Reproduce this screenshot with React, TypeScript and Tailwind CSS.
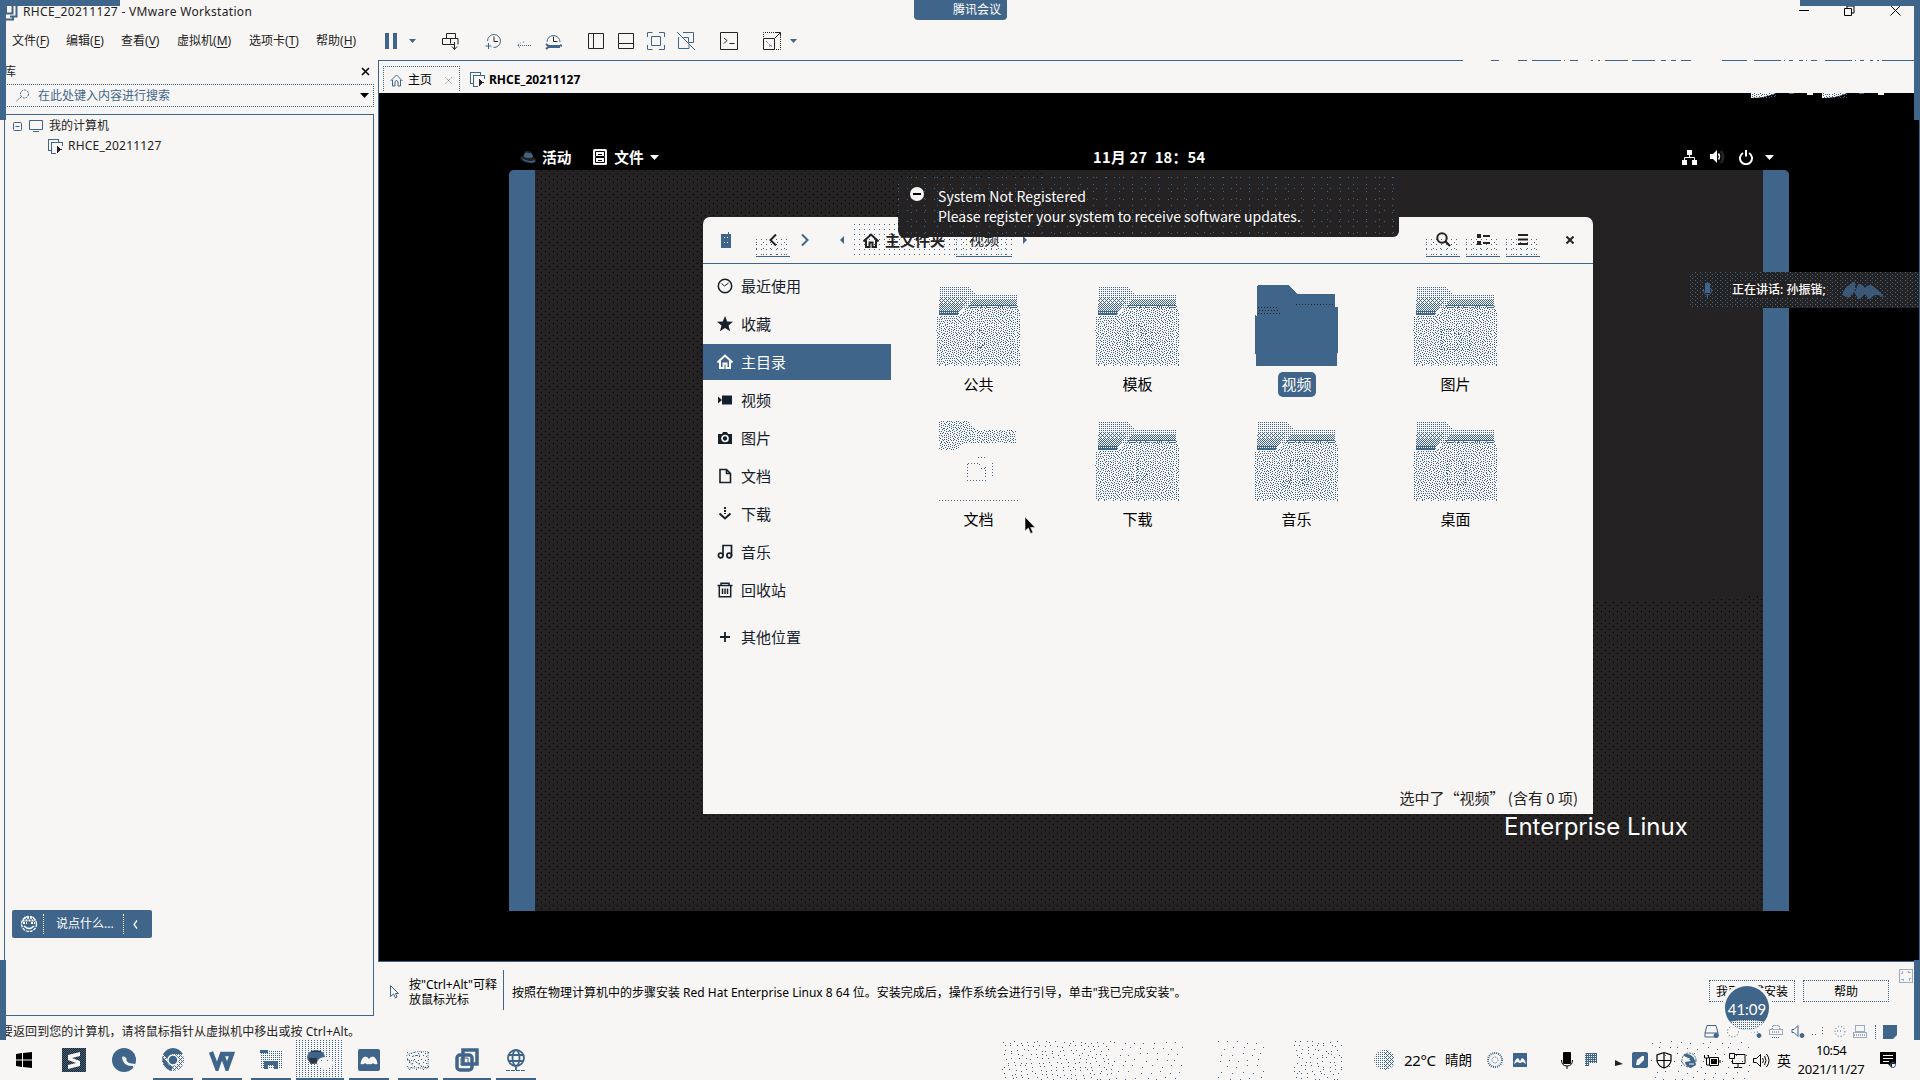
import type { ReactNode } from 'react';

const BLUE = '#40658a';
const DARK = '#242223';

type IconProps = { w: number; h: number; children: ReactNode; className?: string };

function Ico({ w, h, children, className = '' }: IconProps) {
  return (
    <svg width={w} height={h} viewBox={`0 0 ${w} ${h}`} fill="none" stroke="currentColor" className={`shrink-0 ${className}`}>
      {children}
    </svg>
  );
}

/* One error-diffused 40x40 tile of the given coverage, so the grain has no visible grid */
function grain(coverage: number): string {
  const n = 40;
  const buf = Array.from({ length: n + 1 }, () => new Array<number>(n + 2).fill(coverage));
  let seed = 7;
  let d = '';
  for (let y = 0; y < n; y++) {
    for (let x = 0; x < n; x++) {
      seed = (seed * 1103515245 + 12345) % 2147483648;
      const v = buf[y][x];
      const on = v + (seed / 2147483648 - 0.5) * 0.25 > 0.5;
      const e = v - (on ? 1 : 0);
      buf[y][x + 1] += (e * 7) / 16;
      if (x > 0) buf[y + 1][x - 1] += (e * 3) / 16;
      buf[y + 1][x] += (e * 5) / 16;
      buf[y + 1][x + 1] += e / 16;
      if (on) d += `M${x} ${y}h1v1h-1z`;
    }
  }
  return d;
}

const GRAIN = grain(0.24);

/* Shared halftone patterns used by the dithered drawings */
function Patterns() {
  return (
    <svg width="0" height="0" className="absolute" shapeRendering="crispEdges">
      <defs>
        <pattern id="grain" width="40" height="40" patternUnits="userSpaceOnUse">
          <path fill={BLUE} d={GRAIN} />
        </pattern>
        <pattern id="d25" width="2" height="2" patternUnits="userSpaceOnUse">
          <path fill={BLUE} d="M0 0h1v1h-1z" />
        </pattern>
        <pattern id="d37" width="4" height="4" patternUnits="userSpaceOnUse">
          <path fill={BLUE} d="M0 0h1v1h-1zM2 0h1v1h-1zM1 1h1v1h-1zM0 2h1v1h-1zM2 2h1v1h-1zM3 3h1v1h-1z" />
        </pattern>
        <pattern id="d50" width="2" height="2" patternUnits="userSpaceOnUse">
          <path fill={BLUE} d="M0 0h1v1h-1zM1 1h1v1h-1z" />
        </pattern>
        <pattern id="d75" width="2" height="2" patternUnits="userSpaceOnUse">
          <path fill={BLUE} d="M0 0h2v1h-2zM1 1h1v1h-1z" />
        </pattern>
        <pattern id="d06" width="7" height="7" patternUnits="userSpaceOnUse">
          <path fill={BLUE} d="M0 1h1v1h-1zM4 0h1v1h-1zM2 4h1v1h-1zM6 5h1v1h-1z" />
        </pattern>
      </defs>
    </svg>
  );
}

const MENUS: [string, string, string][] = [
  ['文件', 'F', 'w-[54px]'],
  ['编辑', 'E', 'w-[55px]'],
  ['查看', 'V', 'w-[56px]'],
  ['虚拟机', 'M', 'w-[72px]'],
  ['选项卡', 'T', 'w-[67px]'],
  ['帮助', 'H', 'w-[69px]'],
];

function VmIcon() {
  return (
    <svg width="15" height="15" viewBox="0 0 15 15" fill="none" stroke={BLUE} shapeRendering="crispEdges" className="shrink-0">
      <path d="M3.500 11.500h-3v-11h10v2M14 6.500v-3h-10.500v10.500h4" />
      <path d="M8.500 6.500l5 4-5 4z" fill={DARK} stroke="none" />
    </svg>
  );
}

function TitleBar() {
  return (
    <div className="flex h-[22px] items-center justify-between pr-[19px]">
      <div className="flex items-center">
        <Ico w={19} h={19} className="text-[#40658a]">
          <path d="M6 3.500v8h6.500v-8M10 14.500h6.500v-11M5 14.500v3h8v-3" strokeWidth="2" />
        </Ico>
        <span className="ml-[4px] mt-[2px] text-[12px] tracking-[0.320px] text-[#242223]">RHCE_20211127 - VMware Workstation</span>
      </div>
      <div className="mt-[-1px] flex items-center text-black">
        <Ico w={11} h={11}><path d="M0 5.500h10" /></Ico>
        <Ico w={12} h={12} className="ml-[34px]"><path d="M.5 3.500h7v7h-7zM3 3v-2h7v7h-2" /></Ico>
        <Ico w={11} h={11} className="ml-[34px]"><path d="M.5.500l10 10M10.500.500l-10 10" /></Ico>
      </div>
    </div>
  );
}

function Caret({ className = '' }: { className?: string }) {
  return <svg width="7" height="4" viewBox="0 0 7 4" className={`shrink-0 ${className}`}><path fill="currentColor" d="M0 0h7l-3.500 4z" /></svg>;
}

function MenuBar() {
  return (
    <div className="flex h-[38px] items-center pl-3 text-[12px] text-[#242223]">
      {MENUS.map(([t, k, w]) => (
        <span key={k} className={`mt-[-1px] shrink-0 whitespace-nowrap ${w}`}>{t}(<u className="underline-offset-2">{k}</u>)</span>
      ))}
      <div className="flex h-5 items-center text-[#40658a]">
        <svg width="12" height="16"><path fill={BLUE} d="M0 0h4v16h-4zM8 0h4v16h-4z" /></svg>
        <Caret className="ml-3" />
        <Ico w={17} h={17} className="ml-[26px] text-[#242223]">
          <path d="M4.500 5.500v-5h9v5M12 11.500h-11.500v-6h15.500v6M8.500 5.500v5M12.500 9v7M10 13.500l2.500 3 2.500-3" />
        </Ico>
        <Ico w={17} h={17} className="ml-[26px]">
          <path d="M2.500 8a6.500 6.500 0 1 1 6 6.500" /><path stroke={DARK} d="M9 3.500v5h4" /><path d="M3.500 10v6M.500 13h6" />
        </Ico>
        <Ico w={14} h={17} className="ml-[15px]">
          <path d="M1 12.500h13M3.500 10l-3 2.500 3 2.500M6.500 8.500v1" strokeDasharray="1 1" />
        </Ico>
        <Ico w={17} h={17} className="ml-[14px]">
          <path d="M2 9a6.500 6.500 0 1 1 13 0" /><path stroke={DARK} d="M8.500 3.500v5h4" /><path strokeWidth="3" d="M3 13.500h12" /><path strokeWidth="2" d="M1 11l3 2.500-3 2.500M15 12l2 1" />
        </Ico>
        <Ico w={17} h={17} className="ml-[26px] text-[#242223]"><path d="M.5.500h15v15h-15zM5.500.500v15" /></Ico>
        <Ico w={17} h={17} className="ml-[13px] text-[#242223]"><path d="M.5.500h15v15h-15zM.500 10.500h15" /></Ico>
        <Ico w={18} h={18} className="ml-[12px]"><path d="M.500 5v-4.500h5M12 .500h5.500v4.500M17.500 13v4.500h-5.500M5.500 17.500h-5v-4.500M4.500 4.500h9v9h-9z" /></Ico>
        <Ico w={18} h={18} className="ml-[12px]"><path d="M6 .500h10.500v10h-5v-5h-5M1.500 5v11.500h10.500v-4M0 0l18 18" /></Ico>
        <Ico w={18} h={18} className="ml-[25px] text-[#242223]"><path d="M.500.500h17v17h-17zM4 6l3 2.500-3 3M9.500 11.500h5" /></Ico>
        <Ico w={18} h={18} className="ml-[25px]">
          <path stroke={DARK} d="M.500 6.500h11v11h-11zM12 6l5-5M13 .500h4.500v4" /><path stroke={DARK} strokeDasharray="1 1" d="M.500 5v-4.500h13M17.500 5v12.500h-6" /><path strokeDasharray="1 1" d="M3 9l5 5M6 14h3" />
        </Ico>
        <Caret className="ml-[9px]" />
      </div>
    </div>
  );
}

function Library() {
  return (
    <aside className="flex w-[378px] shrink-0 flex-col pr-1 text-[12px] text-[#242223]">
      <div className="flex h-[24px] items-center justify-between pl-[4px] pr-[4px]">
        <span>库</span>
        <Ico w={9} h={9} className="mt-[-2px] text-black"><path d="M1 1l7 7M8 1l-7 7" strokeWidth="1.600" /></Ico>
      </div>
      <div className="flex h-[23px] items-center justify-between border-y border-r border-dotted border-[#40658a] pl-[16px] pr-1">
        <div className="flex items-center gap-[8px] text-[#40658a]">
          <Ico w={14} h={13}><circle cx="8.500" cy="5" r="4" strokeDasharray="2 1" /><path d="M5 8l-5 4.500" strokeDasharray="2 1" /></Ico>
          <span>在此处键入内容进行搜索</span>
        </div>
        <svg width="9" height="5"><path d="M0 0h9l-4.500 5z" /></svg>
      </div>
      <div className="ml-1 mt-[7px] flex h-[902px] flex-col border border-[#40658a]">
        <div className="flex h-[22px] items-center pl-[8px]">
          <Ico w={9} h={9} className="text-[#40658a]"><rect x=".5" y=".5" width="8" height="8" rx="1" /><path d="M2.500 4.500h4" /></Ico>
          <Ico w={15} h={12} className="ml-[7px] text-[#40658a]"><path d="M.500.500h13v9h-13zM4 11.500h6" /></Ico>
          <span className="ml-[5px]">我的计算机</span>
        </div>
        <div className="flex h-[18px] items-center pl-[43px]">
          <VmIcon />
          <span className="ml-[5px] tracking-[0.200px]">RHCE_20211127</span>
        </div>
        <div className="mb-[77px] ml-[7px] mt-auto flex h-7 w-[140px] items-center rounded-[2px] bg-[#40658a] text-white">
          <Ico w={18} h={18} className="ml-2"><circle cx="9" cy="9" r="7.500" strokeWidth="1.300" strokeDasharray="3 1" /><path d="M2.500 5.500h13M4 2.800h10M3 8h4M11 8h4" strokeWidth="2" strokeDasharray="2 1" /><path d="M4 11q5 5 10 0" strokeWidth="1.500" /></Ico>
          <div className="ml-[5px] h-5 border-l border-dotted border-white" />
          <span className="ml-[12px] w-[67px]">说点什么...</span>
          <div className="h-5 border-l border-dotted border-white" />
          <Ico w={5} h={9} className="ml-[9px]"><path d="M4 .500l-3 4 3 4" strokeWidth="1.300" /></Ico>
        </div>
      </div>
    </aside>
  );
}

function Tabs() {
  return (
    <div className="flex h-[32px] items-end pl-1 text-[12px] text-black">
      <div className="mb-[2px] flex h-[25px] w-[77px] items-center border border-b-0 border-dotted border-[#40658a] pl-[6px] pt-[2px]">
        <Ico w={13} h={13} className="text-[#40658a]"><path d="M.500 7l6-6 6 6M2.500 6v6h2.500v-4.500q1.500-2 3 0v4.500h2.500v-6" /></Ico>
        <span className="ml-[5px]">主页</span>
        <Ico w={7} h={7} className="ml-[13px] text-[#40658a]"><path d="M.500.500l6 6M6.500.500l-6 6" strokeDasharray="1 1" /></Ico>
      </div>
      <div className="mb-[2px] ml-[10px] flex h-[25px] items-center pt-[2px]">
        <VmIcon />
        <span className="ml-[4px] text-[12px] font-bold">RHCE_20211127</span>
      </div>
    </div>
  );
}

const FRONT_GLYPHS: Record<string, string> = {
  公共: 'M34 50l8-6 8 6M34 58l8 6 8-6',
  模板: 'M32 40h14v24h-14zM50 42v14l6 6v-16',
  图片: 'M28 44h28v20h-28zM42 48a6 6 0 1 0 .1 0',
  下载: 'M42 40v22M32 54l10 10 10-10',
  音乐: 'M36 64v-24h18v22M34 66h-6v-5h8M54 64h-6v-5h6',
  桌面: 'M34 40h12l6 6v18h-18z',
};

function Folder({ name, ghost, selected }: { name: string; ghost?: boolean; selected?: boolean }) {
  const back = 'M3 30V2q0-1 1-1h28l8 9h41v13H30q-4 0-6 4t-3 3z';
  return (
    <div className="flex w-[159px] flex-col items-center">
      <svg width="84" height="84" viewBox="0 0 84 84" shapeRendering="crispEdges" fill="none" className="ml-[-2px]">
        {selected && (
          <>
            <path fill={BLUE} d="M3 31V2q0-2 2-2h29l9 9h37q1 0 1 1v12h3v34l-1 25h-81l-1-25v-26z" />
            <path stroke={DARK} strokeDasharray="1 2" d="M42 19.500h37M4 22.500h20M5 25.500h20M4 28.500h22" />
          </>
        )}
        {ghost && (
          <>
            <path fill="url(#grain)" d={back} />
            <path stroke={BLUE} strokeDasharray="1 2" d="M3 80.500h79M31.500 43.500v15M49.500 47v12M42 37.500h9M56.500 43v15M32 43.500h10M43 44.500h3M45 48.500h4M31 60.500h20" />
          </>
        )}
        {!selected && !ghost && (
          <>
            <path fill="url(#d25)" d={back} />
            <path fill="url(#d37)" d="M3 12h28v6H3z" />
            <path fill="url(#d50)" d="M3 18h26l-5 8-3 4H3zM36 15h45v5H34z" />
            <path fill="url(#d75)" d="M3 25h21l-3 5H3z" />
            <path fill={BLUE} d="M3 28h20l-2 2H3zM32 19.500h49v1H32z" />
            <path fill="url(#grain)" d="M0 31h21q4 0 6-4t5-6h50v3h2v57H1z" />
            <path stroke={BLUE} strokeDasharray="1 2" d={FRONT_GLYPHS[name]} />
          </>
        )}
      </svg>
      <span className={selected ? 'mt-[3px] flex h-[25px] w-[38px] items-center justify-center rounded-[5px] bg-[#40658a] text-white' : 'mt-[3px] flex h-[25px] items-center text-black'}>
        {name}
      </span>
    </div>
  );
}

const SIDEBAR: [string, ReactNode][] = [
  ['最近使用', <><circle cx="8" cy="8" r="6.700" strokeWidth="1.500" /><path d="M4.500 5.500l3 2.500 4-3" strokeWidth="1" /></>],
  ['收藏', <path key="s" fill="currentColor" stroke="none" d="M8 0l2.200 5.500 5.800.3-4.500 3.700 1.600 5.700-5.100-3.300-5.100 3.300 1.600-5.700-4.500-3.700 5.800-.3z" />],
  ['主目录', <path key="h" d="M.500 8.500l7.500-7 7.500 7M3 7v7h3.500v-4.500h3v4.500h3.500v-7" strokeWidth="2" />],
  ['视频', <path key="v" fill="currentColor" stroke="none" d="M5 3.500h10v9h-10zM1 4.500l4 3.500-4 3.500z" />],
  ['图片', <><path fill="currentColor" stroke="none" d="M1 4h4l1-2h4l1 2h4v10h-14z" /><circle cx="8" cy="8.500" r="3" stroke="#f7f6f4" strokeWidth="1.700" /></>],
  ['文档', <path key="d" d="M3 1.500h6.500l4 4v9h-10.500zM9.500 1.500v4h4" strokeWidth="1.600" />],
  ['下载', <><path d="M8 1v7" strokeWidth="2" strokeDasharray="2 1" /><path d="M2.500 7.500l5.500 5 5.500-5" strokeWidth="2" /></>],
  ['音乐', <><path d="M6 12v-10.500h8.500v10.500" strokeWidth="1.700" /><circle cx="3.700" cy="11.500" r="2.300" strokeWidth="1.700" /><circle cx="12.200" cy="11.500" r="2.300" strokeWidth="1.700" /></>],
  ['回收站', <path key="t" d="M.500 3.500h15M4 3v-1.700h8v1.700M2.300 4v10.700h11.400v-10.700M5.500 6.500v5.500M8 6.500v5.500M10.500 6.500v5.500" strokeWidth="1.500" />],
];

function SideItem({ label, icon, active }: { label: string; icon: ReactNode; active?: boolean }) {
  return (
    <div className={`mb-[2px] flex h-9 w-[188px] items-center pl-[14px] ${active ? 'bg-[#40658a] text-white' : 'text-[#15202b]'}`}>
      <Ico w={16} h={16}>{icon}</Ico>
      <span className="ml-[8px]">{label}</span>
    </div>
  );
}

const SPECKLED = 'bg-[linear-gradient(#f7f6f4_48%,transparent_0),conic-gradient(from_270deg_at_1px_1px,#40658a_90deg,transparent_0),conic-gradient(from_270deg_at_1px_1px,#40658a_90deg,transparent_0)] bg-[length:100%_100%,5px_5px,7px_6px]';

function HeaderButton({ children, className = '' }: { children: ReactNode; className?: string }) {
  return (
    <div className={`flex h-[33px] w-[34px] items-center justify-center border-b border-[#40658a] ${SPECKLED} ${className}`}>
      {children}
    </div>
  );
}

function FileManager() {
  return (
    <div className="flex h-[597px] w-[890px] flex-col rounded-t-[7px] bg-[#f7f6f4] font-['Noto_Sans_CJK_SC',sans-serif] text-[15px]">
      <div className="flex h-[47px] items-center border-b border-[#40658a] text-[#242223]">
        <svg width="12" height="16" className="ml-[17px] mt-[-1px]"><path fill={BLUE} d="M1 2h7v-2h1v2h2v14h-10z" /><path stroke="#f7f6f4" strokeDasharray="1 2" d="M4 5.500h5M4 10.500h5" /></svg>
        <HeaderButton className="ml-[24px]"><Ico w={8} h={12}><path d="M7 .500l-5.500 5.500 5.500 5.500" strokeWidth="2" /></Ico></HeaderButton>
        <Ico w={8} h={12} className="ml-[11px] text-[#40658a]"><path d="M1 .500l5.500 5.500-5.500 5.500" strokeWidth="2" /></Ico>
        <svg width="4" height="8" className="ml-[31px]"><path fill={BLUE} d="M4 0v8l-4-4z" /></svg>
        <div className="ml-[10px] flex h-[33px] w-[102px] items-center bg-[conic-gradient(from_270deg_at_1px_1px,#40658a_90deg,transparent_0)] bg-[length:5px_5px] pl-[9px]">
          <Ico w={16} h={15}><path d="M.500 8.500l7.500-7 7.500 7M3 7v7h3.500v-4.500h3v4.500h3.500v-7" strokeWidth="2" /></Ico>
          <span className="ml-[6px] whitespace-nowrap text-[15px] font-bold">主文件夹</span>
        </div>
        <div className={`flex h-[33px] w-[56px] items-center justify-center border-b border-[#40658a] ${SPECKLED}`}>视频</div>
        <svg width="4" height="8" className="ml-[11px]"><path fill={BLUE} d="M0 0v8l4-4z" /></svg>
        <div className="ml-auto flex gap-[6px] pr-[19px]">
          <HeaderButton><Ico w={15} h={15}><circle cx="6" cy="6" r="4.700" strokeWidth="2" /><path d="M9.500 9.500l4.500 4.500" strokeWidth="2.200" /></Ico></HeaderButton>
          <HeaderButton><svg width="13" height="11"><path fill={DARK} d="M0 0h4v4H0zM0 7h4v4H0zM6 1h7v2H6zM6 8h7v2H6z" /></svg></HeaderButton>
          <HeaderButton><svg width="10" height="11"><path fill={DARK} d="M0 0h10v2H0zM0 4.500h10v2H0zM0 9h10v2H0z" /></svg></HeaderButton>
          <div className="flex h-[33px] w-[28px] items-center justify-end"><Ico w={8} h={8}><path d="M.500.500l7 7M7.500.500l-7 7" strokeWidth="2" /></Ico></div>
        </div>
      </div>
      <div className="flex flex-1">
        <nav className="flex w-[196px] flex-col pt-[4px]">
          {SIDEBAR.map(([label, icon]) => <SideItem key={label} label={label} icon={icon} active={label === '主目录'} />)}
          <div className="mt-[9px]">
            <SideItem label="其他位置" icon={<path d="M3 8h10M8 3v10" strokeWidth="1.800" />} />
          </div>
        </nav>
        <div className="flex flex-1 flex-col">
          <div className="grid w-[636px] grid-cols-4 gap-y-[23px] pt-[21px]">
            {['公共', '模板', '视频', '图片', '文档', '下载', '音乐', '桌面'].map((n) => (
              <Folder key={n} name={n} ghost={n === '文档'} selected={n === '视频'} />
            ))}
          </div>
          <div className="mb-[5px] mr-[15px] mt-auto self-end whitespace-pre text-[#242223]">选中了“视频” (含有 0 项)</div>
        </div>
      </div>
    </div>
  );
}

function Notification() {
  return (
    <div className="absolute left-[519px] top-[84px] flex h-[60px] w-[501px] rounded-[6px] bg-[#242223] bg-[conic-gradient(from_270deg_at_1px_1px,#40658a_90deg,transparent_0),conic-gradient(from_270deg_at_1px_1px,#40658a_90deg,transparent_0)] bg-[length:9px_11px,13px_7px] font-['Noto_Sans_CJK_SC',sans-serif] text-[14px] leading-[20px] text-white">
      <svg width="14" height="14" className="ml-[12px] mt-[10px]"><circle cx="7" cy="7" r="7" fill="#f7f6f4" /><path stroke="#000" strokeWidth="2" d="M3 7h8" /></svg>
      <div className="ml-[14px] whitespace-nowrap pt-[9px]">
        <div className="tracking-[0.080px]">System Not Registered</div>
        <div>Please register your system to receive software updates.</div>
      </div>
    </div>
  );
}

function VirtualScreen() {
  return (
    <div className="relative h-[868px] bg-black pl-[130px] pt-[48px]">
      <div className="flex h-[29px] w-[1280px] items-center pl-[11px] pr-[15px] pt-[3px] font-['Noto_Sans_CJK_SC',sans-serif] text-[14.670px] font-bold text-white">
        <div className="flex w-[560px] items-center">
          <svg width="16" height="13"><path fill={DARK} d="M0 6q3 0 4-4t7-1l2 5q3 1 3 4t-8 2-8-6z" /><path fill={BLUE} d="M4 6q0-6 5-4 3-1 4 4-4 2-9 0zM2 7q6 5 13 2 0 4-7 2-5-1-6-4z" /></svg>
          <span className="ml-[6px]">活动</span>
          <svg width="14" height="17" className="ml-[22px]"><rect width="14" height="16" rx="1.500" fill="#f7f6f4" /><path fill="none" stroke="#000" d="M2.500 2.500h9v5h-9zM2.500 8.500h9v5h-9zM5 5.500h4M5 11.500h4" /></svg>
          <span className="ml-[7px]">文件</span>
          <svg width="9" height="5" className="ml-[6px]"><path fill="#fff" d="M0 0h9l-4.500 5z" /></svg>
        </div>
        <div className="whitespace-pre pl-[13px] tracking-[0.300px]">11月 27  18：54</div>
        <div className="ml-auto flex items-center">
          <svg width="15" height="15"><path fill="#fff" d="M5 0h5v5H5zM0 10h5v5H0zM10 10h5v5h-5z" /><path stroke="#fff" fill="none" d="M7.500 5v2.500M2.500 10v-2.500h10v2.500" /></svg>
          <svg width="16" height="14" className="ml-[13px]"><path fill="#fff" d="M0 4h3l4-4v13l-4-4H0z" /><path fill="none" stroke="#fff" strokeWidth="1.500" d="M8.500 3.500q2 3 0 6" /><path fill="none" stroke={DARK} strokeWidth="3" d="M11 1q4 6 0 12" /></svg>
          <svg width="14" height="15" className="ml-[13px]"><path fill="none" stroke="#fff" strokeWidth="2" d="M4 3a6 6 0 1 0 6 0M7 0v6.500" /></svg>
          <svg width="9" height="5" className="ml-[12px]"><path fill="#fff" d="M0 0h9l-4.500 5z" /></svg>
        </div>
      </div>
      <div className="flex h-[741px] w-[1280px] justify-between overflow-hidden rounded-t-[5px] bg-[#242223] bg-[radial-gradient(ellipse_at_88%_10%,#242223_38%,transparent_0),conic-gradient(from_270deg_at_1px_1px,#000_90deg,transparent_0),conic-gradient(from_270deg_at_1px_1px,#000_90deg,transparent_0)] bg-[length:100%_100%,8px_6px,8px_6px] bg-[position:0_0,0_0,4px_3px]">
        <div className="w-[26px] bg-[#40658a]" />
        <div className="flex-1 pl-[168px] pt-[47px]">
          <FileManager />
          <div className="ml-[801px] mt-[-1px] font-[Inter] text-[24px] leading-7 text-white">Enterprise Linux</div>
        </div>
        <div className="w-[26px] bg-[#40658a]" />
      </div>
      <Notification />
      <div className="absolute right-0 top-[179px] flex h-9 w-[230px] items-center rounded-l-[3px] bg-[#242223] bg-[conic-gradient(from_270deg_at_1px_1px,#40658a_90deg,transparent_0),conic-gradient(from_270deg_at_1px_1px,#40658a_90deg,transparent_0)] bg-[length:5px_4px,5px_4px] bg-[position:0_0,2px_2px] text-[12px] text-white">
        <svg width="9" height="15" className="ml-[13px]"><path fill={BLUE} d="M2 0h5v10H2z" /><path fill="none" stroke={BLUE} d="M.500 6q0 6 4 6t4-6M4.500 12v3" /></svg>
        <div className="ml-[20px] w-[110px]"><span className="bg-[#242223] font-medium">正在讲话: 孙振锴;</span></div>
        <svg width="42" height="18"><path fill={BLUE} opacity=".8" d="M0 14Q2 6 13 0v11l3-8q3-1 7 4 3-5 8-2 10 8 11 12-6-5-11-2l-4 4-4-6-6 6-5-8-5 6z" /></svg>
      </div>
      <svg width="140" height="6" className="absolute left-[1372px] top-0"><path fill="#f7f6f4" d="M0 0h25q-10 5-25 5zM71 0h25q-10 5-25 5zM56 0h6v2h-6zM127 0h6v2h-6z" /><path fill="url(#grain)" d="M0 0h25v5h-25zM71 0h25v5h-25z" /><path fill={BLUE} d="M38 0h5v1h-5zM108 0h5v1h-5z" /></svg>
    </div>
  );
}

function HintBar() {
  return (
    <div className="flex h-[58px] items-start pt-2 text-[12px] text-black">
      <svg width="9" height="14" className="ml-[12px] mt-[15px]"><path fill="none" stroke={BLUE} d="M.500.500v11l3-2.500 2 4 1.500-1-1.500-3.500h3z" /></svg>
      <div className="ml-[10px] mt-[7px] w-[94px] leading-[15px]">
        <div className="whitespace-nowrap">按"Ctrl+Alt"可释</div>
        <div>放鼠标光标</div>
      </div>
      <div className="h-10 w-px bg-[#40658a]" />
      <div className="ml-[8px] mt-[14px] whitespace-nowrap">按照在物理计算机中的步骤安装 Red Hat Enterprise Linux 8 64 位。安装完成后，操作系统会进行引导，单击"我已完成安装"。</div>
      <div className="relative ml-auto mt-[10px] flex h-[22px] w-[86px] items-center justify-center border border-dotted border-[#40658a] pt-[2px]">
        我已完成安装
        <div className="absolute left-[15px] top-[5px] flex h-11 w-11 flex-col items-center justify-end overflow-hidden rounded-full bg-[#40658a] font-[Lato] text-[15px] text-white ring-[3px] ring-[#f7f6f4]">
          <span className="leading-[16px]">41:09</span>
          <div className="mt-[3px] h-[10px] w-11 rounded-t-[50%] bg-[#f7f6f4] bg-[conic-gradient(from_270deg_at_1px_1px,#40658a_90deg,transparent_0)] bg-[length:2px_2px]" />
        </div>
      </div>
      <div className="ml-2 mt-[10px] flex h-[22px] w-[86px] items-center justify-center border border-dotted border-[#40658a] pt-[2px]">帮助</div>
      <Ico w={14} h={14} className="ml-[10px] mr-[7px] mt-[-1px] text-[#40658a]"><path strokeDasharray="1 1" d="M.500.500h13v13h-13zM3 5v-2h2M9 3h2v2M11 9v2h-2M5 11h-2v-2" /></Ico>
    </div>
  );
}

function StatusBar() {
  return (
    <div className="mt-[-4px] flex h-[24px] items-center overflow-hidden pt-[7px] text-[12px] text-[#242223]">
      <span className="ml-[1px] whitespace-nowrap tracking-[0.060px]">要返回到您的计算机，请将鼠标指针从虚拟机中移出或按 Ctrl+Alt。</span>
      <div className="ml-auto flex items-center gap-[7.500px] pr-[23px] text-[#40658a]">
        <Ico w={15} h={13}><path d="M1 8l2-7.500h9l2 7.500v4h-13zM1 8h13" /><circle cx="12" cy="10.500" r="2" fill={BLUE} /></Ico>
        <Ico w={14} h={13}><circle cx="7" cy="6.500" r="5.500" strokeDasharray="1 2" /></Ico>
        <Ico w={14} h={13}><path d="M0 3.500h10M3 7h8" strokeDasharray="1 2" /><circle cx="11" cy="10.500" r="2" fill={BLUE} /></Ico>
        <Ico w={14} h={13}><path d="M3 4l1-3.500h6l1 3.500M.500 4.500h13v5h-13zM3 12.500h8M3 7h8" strokeDasharray="1 1" /></Ico>
        <Ico w={14} h={13}><path d="M1 4.500h2l4-4v11l-4-4h-2z" /><circle cx="11" cy="10.500" r="2" fill={BLUE} /></Ico>
        <Ico w={14} h={13}><path d="M0 9.500h6M10.500 2v7" strokeDasharray="1 2" /></Ico>
        <Ico w={12} h={13}><circle cx="6" cy="6.500" r="5" strokeDasharray="1 2" /><path d="M3 6h6" strokeDasharray="1 2" /></Ico>
        <Ico w={14} h={13}><path d="M2.500.500h9v6h-9zM.500 7.500h13v5h-13zM1 10h12" strokeDasharray="1 1" /></Ico>
        <div className="h-[14px] border-l border-dotted border-[#40658a]" />
        <svg width="14" height="14"><path fill={BLUE} d="M0 0h14v10l-4 4H0z" /></svg>
      </div>
    </div>
  );
}

const APPS: { key: string; line?: string; icon: ReactNode }[] = [
  { key: 'start', icon: <svg width="16" height="16"><path d="M0 2l6-1v6.500H0zM7 1l9-1v7.500H7zM0 8.500h6v6.500l-6-1zM7 8.500h9v7.500l-9-1z" /></svg> },
  { key: 'sublime', icon: <svg width="24" height="24"><path fill={DARK} d="M0 0h24v24H0z" /><path fill="url(#d50)" d="M0 0h24v24H0z" /><path fill="#f7f6f4" d="M6 7l12-3v4l-8 2 8 3v5l-12 3v-4l8-2-8-3z" /></svg> },
  { key: 'edge', icon: <svg width="24" height="24"><circle cx="12" cy="12" r="12" fill={BLUE} /><path fill="#f7f6f4" d="M10 9.500q.5-1.500 2-1 3 1 2.500 4 .5 3 9 3.500-1 2-3.500 2-9 0-10-8.500z" /><path fill="#f7f6f4" d="M24 16l-3 4v-3z" /></svg> },
  { key: 'chrome', line: 'w-10', icon: <svg width="24" height="24"><circle cx="12" cy="12" r="11" fill="url(#d37)" /><path fill={BLUE} d="M2 6Q6 0 12 0t10 6H12q-5 1-5 6zM1 8l7 9 4 2-2 4Q1 20 1 8z" /><circle cx="12" cy="12" r="5" fill={BLUE} stroke="#f7f6f4" strokeWidth="1.500" /></svg> },
  { key: 'wps', line: 'w-10', icon: <svg width="26" height="22"><path fill="none" stroke={BLUE} strokeWidth="4.500" d="M2 3l6 16 5-14h10l-5 14-5-14" /></svg> },
  { key: 'explorer', line: 'w-10', icon: <svg width="24" height="22"><path fill="url(#d25)" d="M2 2h22v18H2z" /><path fill={BLUE} d="M1 1h8v3H1zM5 12h14v8h-4v-4H9v4H5z" /></svg> },
  { key: 'wechat', line: 'w-12', icon: <svg width="28" height="24"><ellipse cx="10" cy="9" rx="9" ry="7" fill={BLUE} /><path fill={DARK} d="M3 10h8v4l-4 2H4zM5 3h10v1H5z" opacity=".7" /><ellipse cx="19" cy="15" rx="8" ry="6" fill="#f7f6f4" /><path fill={BLUE} d="M15 12h1v1h-1zM21 12h1v1h-1z" /></svg> },
  { key: 'meeting', line: 'w-10', icon: <svg width="22" height="22"><rect width="22" height="22" rx="2" fill={BLUE} /><path fill="#f7f6f4" d="M2.500 15Q3 9 7 7.500q3 0 4 2.500 1-2.500 4-2.500 4 1.500 4.500 7.500-3 1-4.500-1-1.500 2-4 1-2.500 1-4-1-1.500 2-4.500 1z" /></svg> },
  { key: 'image', line: 'w-10', icon: <svg width="26" height="24"><path fill="url(#d06)" d="M2 2h22v20H2z" /><path fill="none" stroke={BLUE} strokeDasharray="1 1" d="M1 8q8-6 22-4v16H3M2 12l8 1 6 5 8 2M8 8l8-1M2 10l6 8" /></svg> },
  { key: 'vmware', line: 'w-12', icon: <svg width="24" height="24"><g fill="none" stroke={BLUE} strokeWidth="3.500"><rect x="2" y="7" width="15" height="15" rx="3" /><path d="M8 2h14v14H8z" /></g><path fill="none" stroke={BLUE} d="M6 10h7v7H6z" /></svg> },
  { key: 'globe', line: 'w-10', icon: <svg width="20" height="23"><g fill="none" stroke={BLUE} strokeWidth="1.800"><circle cx="10" cy="9" r="8" /><ellipse cx="10" cy="9" rx="3.500" ry="8" /><path d="M2 6h16M2 12h16M10 17v4" /><path strokeDasharray="4 1" strokeWidth="1" d="M0 21.500h20" /></g></svg> },
];

/* Loose speckle seen behind translucent taskbar areas */
function Speckle({ width, loose, className = '' }: { width: number; loose?: boolean; className?: string }) {
  const dots: string[] = [];
  const step = loose ? 10 : 6;
  let seed = width;
  for (let y = 1, r = 0; y < 38; y += loose ? 6 : 4, r++) {
    for (let x = (r * 7) % step; x < width; x += step) {
      seed = (seed * 1103515245 + 12345) % 2147483648;
      const jx = Math.floor(seed / 65536) % 4;
      const jy = Math.floor(seed / 1048576) % 3;
      dots.push(`M${x + jx} ${y + jy}h1v1h-1z`);
    }
  }
  return <svg width={width} height="40" shapeRendering="crispEdges" className={`shrink-0 ${className}`}><path fill={BLUE} d={dots.join('')} /></svg>;
}

function Taskbar() {
  return (
    <div className="flex h-[40px] items-center text-black">
      <div className="flex h-full">
        {APPS.map((a, i) => (
          <div key={a.key} className={`flex h-full flex-col items-center justify-end ${i === 0 ? 'w-[48px]' : i === 1 ? 'w-[52px]' : 'w-[48.900px]'}`}>
            <div className={`flex h-[38px] items-center justify-center pt-[2px] ${a.key === 'wechat' ? 'w-12 bg-[conic-gradient(from_270deg_at_1px_1px,#40658a_90deg,transparent_0)] bg-[length:3px_2px]' : ''}`}>
              {a.icon}
            </div>
            <div className={`h-[2px] ${a.line ? 'bg-[#40658a]' : ''} ${a.line ?? ''}`} />
          </div>
        ))}
      </div>
      <Speckle width={112} className="ml-[461px]" />
      <Speckle width={70} loose />
      <Speckle width={48} loose className="ml-[33px]" />
      <Speckle width={50} className="ml-[28px]" />
      <svg width="20" height="20" className="ml-[32px]"><circle cx="10" cy="10" r="10" fill="url(#d25)" /><path fill="url(#d37)" d="M11 0a10 10 0 0 1 0 20z" /></svg>
      <span className="ml-[10px] w-[41px] text-[15px] tracking-[-0.4px]">22°C</span>
      <span className="w-[40px] text-[13.500px]">晴朗</span>
      <Ico w={20} h={20} className="text-[#40658a]"><circle cx="10" cy="10" r="3" strokeDasharray="1 1" /><circle cx="10" cy="10" r="7" strokeDasharray="1 1" strokeWidth="2" /></Ico>
      <svg width="14" height="14" className="ml-[8px]"><rect width="14" height="14" fill={BLUE} /><path fill="#f7f6f4" d="M1 11q1-5 4-6l2 3 2-3q3 1 4 6l-3-2-3 1-3-1z" /></svg>
      <svg width="12" height="17" className="ml-[34px]"><rect x="2" width="8" height="12" rx="1" /><path fill="none" stroke="#000" d="M.500 8q0 6 5.500 6t5.500-6M6 14v3" /></svg>
      <svg width="12" height="14" className="ml-[12px]"><path fill="url(#d75)" d="M1 0h11v10H4v3H0V1z" /></svg>
      <svg width="8" height="7" className="ml-[18px] mt-[6px]"><path fill={DARK} d="M0 0l8 4-8 2z" /></svg>
      <svg width="16" height="16" className="ml-[9px]"><rect width="16" height="16" rx="2" fill={BLUE} /><path fill="#f7f6f4" d="M5 8l5-4h2v4l-5 5H4z" /></svg>
      <div className="relative ml-[8px] flex h-[40px] items-center">
        <Speckle width={100} loose className="absolute left-[-6px] top-0" />
        <Ico w={16} h={17}><path d="M8 .500l7 2.500v6q-1 5-7 7-6-2-7-7v-6zM8 0v16M1 8.500h14" strokeWidth="1.200" /></Ico>
        <svg width="18" height="17" className="ml-[8px]"><circle cx="9" cy="8" r="7" fill="none" stroke={BLUE} strokeDasharray="2 1" /><path fill={BLUE} d="M3 3q6-3 11 3l2 7-5 3q-6-2-6-6l6-1z" /><path stroke="#f7f6f4" d="M4 5l6 2M9 12h5" /></svg>
        <svg width="17" height="13" className="ml-[6px]"><path fill="none" stroke="#000" d="M5.500 3.500h9v8h-9zM16 6v3M2.500 4v7h3M.500 1v3h4v-3" /><path d="M7 5h6v5H7z" /></svg>
        <Ico w={17} h={15} className="ml-[8px]"><path d="M5 1.500h11v9H3.500v-4M.500.500h5v5h-5zM5 14.500h8M9 11v3" /></Ico>
        <Ico w={17} h={15} className="ml-[7px]"><path d="M.500 5.500h3l4-4v12l-4-4h-3zM9.500 5q2 2.500 0 5M11.500 3q3 4.500 0 9M13.500 1q5 6.500 0 13" /></Ico>
      </div>
      <span className="ml-[7px] text-[14px]">英</span>
      <div className="ml-[6px] flex w-[68px] flex-col items-center text-[13px] leading-[19px]">
        <span className="tracking-[-0.6px]">10:54</span>
        <span className="tracking-[-0.2px]">2021/11/27</span>
      </div>
      <svg width="17" height="17" className="ml-[15px]"><path d="M0 0h16v12h-4v4l-4-4H0z" /><path stroke="#f7f6f4" d="M3 3.500h10M3 6.500h10M3 9.500h6" /><circle cx="13" cy="13" r="2.500" fill="none" stroke={BLUE} /></svg>
    </div>
  );
}

export default function App() {
  return (
    <div className="relative flex h-[1080px] w-[1920px] flex-col overflow-hidden bg-[#f7f6f4] font-['Noto_Sans','Noto_Sans_CJK_SC',sans-serif]">
      <Patterns />
      <TitleBar />
      <MenuBar />
      <div className="flex h-[960px]">
        <Library />
        <main className="flex w-[1542px] flex-col">
          <svg width="1542" height="1" shapeRendering="crispEdges" className="block shrink-0">
            <path stroke={BLUE} d="M0 .5H1085M1113 .5h8M1140 .5h9M1154 .5h29M1186 .5h1M1192 .5h8M1213 .5h2M1220 .5h2M1227 .5h23M1254 .5h23M1283 .5h5M1293 .5h5M1303 .5h10M1344 .5h25M1376 .5h27M1406 .5h1M1411 .5h4M1421 .5h4M1428 .5h1M1433 .5h6M1447 .5h27M1477 .5h1M1482 .5h4M1492 .5h3M1499 .5h2M1504 .5h38" />
          </svg>
          <div className="flex flex-col border-b border-l border-[#40658a]">
            <Tabs />
            <VirtualScreen />
          </div>
          <HintBar />
        </main>
      </div>
      <StatusBar />
      <Taskbar />

      <div className="absolute left-[914px] top-0 flex h-5 w-[93px] items-center justify-end rounded-b-[4px] bg-[#40658a] pr-[6px] text-[12px] text-white">腾讯会议</div>
      <div className="absolute left-0 top-0 h-[120px] w-[120px] border-l-[6px] border-t-[6px] border-[#40658a]" />
      <div className="absolute right-0 top-0 h-[120px] w-[120px] border-r-[6px] border-t-[6px] border-[#40658a]" />
      <div className="absolute left-0 top-[960px] h-[80px] w-[6px] bg-[#40658a]" />
      <div className="absolute right-0 top-[960px] h-[80px] w-[6px] bg-[#40658a]" />
      <div className="absolute right-0 top-[120px] h-[840px] w-px bg-[#40658a]" />
      <svg width="12" height="17" viewBox="0 0 12 17" className="absolute left-[1025px] top-[517px]"><path stroke="#f7f6f4" strokeWidth=".6" d="M0 0v14l3.300-3 2.400 5.500 2.300-1-2.300-5h4.500z" /></svg>
    </div>
  );
}
